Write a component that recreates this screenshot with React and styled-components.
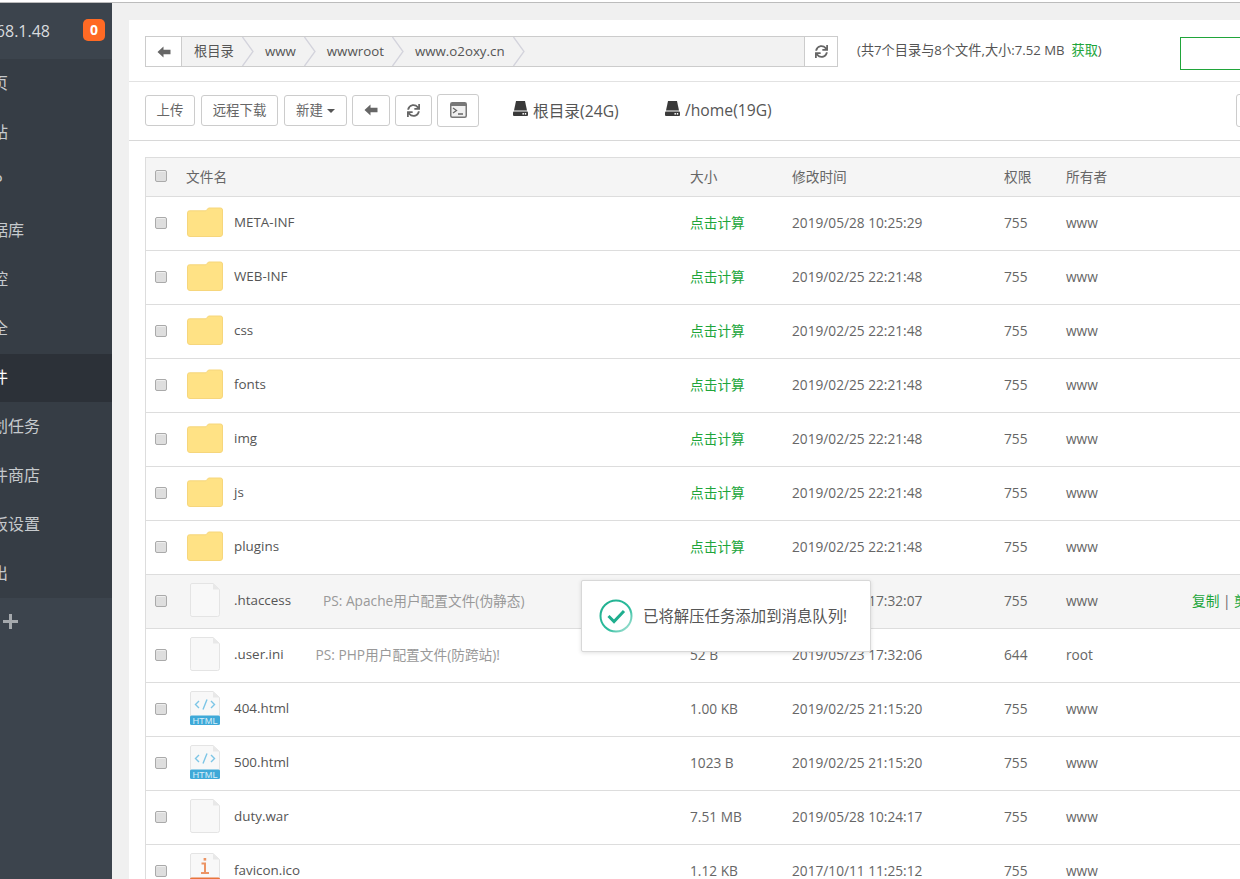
import React from 'react';
import styled, { createGlobalStyle } from 'styled-components';
import { FaSync } from 'react-icons/fa';

const FONT = '"Open Sans", "Noto Sans CJK SC", sans-serif';

const GlobalStyle = createGlobalStyle`
    html, body {
        margin: 0;
        padding: 0;
        background: #f0f0f0;
        overflow: hidden;
    }
    body {
        font-family: ${FONT};
        color: #666;
    }
`;

const Page = styled.div`
    position: relative;
    width: 1240px;
    height: 879px;
    overflow: hidden;
`;

const TopLine = styled.div`
    height: 2px;
    background: #fff;
    border-bottom: 1px solid #bcbcbc;
`;

const Shell = styled.div`
    display: flex;
    height: 876px;
`;

/* sidebar, scrolled to the left so the labels are cut off */
const Sidebar = styled.aside`
    flex: 0 0 112px;
    display: flex;
    flex-direction: column;
    background: #3c444d;
    overflow: hidden;
`;

const SideHead = styled.div`
    height: 56px;
    display: flex;
    align-items: center;
    justify-content: flex-end;
    padding-right: 7px;
`;

const HostName = styled.span`
    font-size: 16px;
    color: #d8dbde;
    margin-right: 33px;
    white-space: nowrap;
`;

const Badge = styled.span`
    flex: none;
    width: 22px;
    height: 22px;
    margin-top: -2px;
    border-radius: 5px;
    background: #ff6a24;
    color: #fff;
    font-size: 14px;
    font-weight: 700;
    text-align: center;
    line-height: 22px;
`;

const Menu = styled.nav`
    background: #363d45;
`;

const MenuItem = styled.div`
    height: 49px;
    line-height: 48px;
    text-indent: -24px;
    font-size: 16px;
    white-space: nowrap;
    color: ${p => (p.$active ? '#fff' : '#c6cacd')};
    background: ${p => (p.$active ? '#2c3138' : 'transparent')};
    box-shadow: ${p => (p.$active ? 'inset 0 1px 0 #363d45' : 'none')};
`;

const AddButton = styled.div`
    padding: 16px 0 0 3px;
    color: #a5a9ad;
    line-height: 0;
`;

const Main = styled.main`
    flex: 0 0 1400px;
    padding: 17px 0 0 17px;
`;

const Panel = styled.div`
    background: #fff;
    height: 900px;
`;

const PathBar = styled.div`
    height: 62px;
    box-sizing: border-box;
    padding: 16px 0 0 16px;
    display: flex;
    border-bottom: 1px solid #e2e2e2;
`;

const Crumbs = styled.div`
    width: 693px;
    height: 31px;
    box-sizing: border-box;
    display: flex;
    background: #f2f2f2;
    border: 1px solid #ccc;
`;

const CrumbEnd = styled.div`
    flex: 0 0 ${p => p.$w}px;
    display: flex;
    align-items: center;
    justify-content: center;
    background: #fff;
    color: #666;
    border-${p => p.$side}: 1px solid #ccc;
    box-sizing: border-box;
`;

const CrumbList = styled.div`
    flex: 1;
    display: flex;
    align-items: center;
    padding-left: 12px;
`;

const Crumb = styled.span`
    font-size: 13.3px;
    color: #555;
    margin: -2px 8px 0 0;
    white-space: nowrap;
`;

const CrumbArrow = styled.svg`
    flex: none;
    width: 12px;
    height: 29px;
    margin-right: 11px;
`;

const PathInfo = styled.div`
    margin-left: 19px;
    font-size: 13.2px;
    line-height: 29px;
    color: #555;
    white-space: nowrap;
    width: 323px;
`;

const GreenLink = styled.span`
    color: #20a53a;
`;

const SearchBox = styled.div`
    width: 200px;
    height: 33px;
    margin-top: 1px;
    box-sizing: border-box;
    border: 1px solid #20a53a;
`;

const ToolBar = styled.div`
    height: 59px;
    box-sizing: border-box;
    padding: 0 0 2px 16px;
    display: flex;
    align-items: center;
    border-bottom: 1px solid #d8d8d8;
`;

const ToolButton = styled.div`
    flex: none;
    box-sizing: border-box;
    width: ${p => p.$w}px;
    height: ${p => p.$h || 31}px;
    margin-right: ${p => p.$mr || 5}px;
    display: flex;
    align-items: center;
    justify-content: center;
    gap: 4px;
    border: 1px solid #ccc;
    border-radius: 3px;
    font-size: 13.4px;
    color: #666;
    background: #fff;
`;

const ToolLabel = styled.span`
    margin-top: -2px;
`;

const Caret = styled.i`
    border-top: 4px solid #555;
    border-left: 4px solid transparent;
    border-right: 4px solid transparent;
    margin-top: 2px;
`;

const Disk = styled.div`
    flex: none;
    display: flex;
    align-items: center;
    gap: 5px;
    font-size: 15.7px;
    color: #555;
    margin-left: ${p => p.$ml}px;
    width: ${p => p.$w}px;
    white-space: nowrap;
`;

const DiskSlot = styled.span`
    display: flex;
    margin-top: -3px;
`;

const TableWrap = styled.div`
    padding: 16px 0 0 16px;
`;

const Table = styled.div`
    border-left: 1px solid #ddd;
    border-top: 1px solid #ddd;
`;

const Row = styled.div`
    display: grid;
    grid-template-columns: 41px 503px 102px 212px 62px 126px 1fr;
    align-items: center;
    box-sizing: border-box;
    height: ${p => (p.$head ? 39 : 54)}px;
    padding-bottom: 2px;
    border-bottom: 1px solid #ddd;
    background: ${p => (p.$shaded ? '#f5f5f5' : '#fff')};
    font-size: 13.7px;
    color: #666;
    white-space: nowrap;
`;

const CheckCell = styled.div`
    display: flex;
    padding-left: 9px;
`;

const CheckBox = styled.span`
    width: 12px;
    height: 12px;
    box-sizing: border-box;
    border: 1px solid #aaa;
    border-radius: 2px;
    background: #dedede;
    box-shadow: inset 0 1px 0 #eee;
`;

const HeadName = styled.span`
    margin-left: -1px;
`;

const NameCell = styled.div`
    display: flex;
    align-items: center;
`;

const IconSlot = styled.div`
    flex: 0 0 47px;
    display: flex;
    padding-left: ${p => (p.$folder ? 0 : 3)}px;
    box-sizing: border-box;
    margin-top: -2px;
`;

const FileName = styled.span`
    color: #555;
    font-size: 13.4px;
    margin-top: -2px;
`;

const Remark = styled.span`
    color: #999;
    margin-left: 32px;
    margin-top: -2px;
`;

const Calc = styled.span`
    color: #20a53a;
`;

const SizeCalc = styled(Calc)`
    margin-top: -2px;
`;

const OpsCell = styled.div`
    margin-top: -2px;
`;

const Sep = styled.span`
    color: #666;
`;

const Toast = styled.div`
    position: absolute;
    left: 581px;
    top: 580px;
    width: 290px;
    height: 72px;
    box-sizing: border-box;
    padding-left: 17px;
    display: flex;
    align-items: center;
    gap: 10px;
    background: #fff;
    border: 1px solid #d8d8d8;
    border-radius: 2px;
    box-shadow: 0 1px 4px rgba(0, 0, 0, 0.12);
    font-size: 15.4px;
    color: #555;
`;

const ToastText = styled.span`
    margin-top: -2px;
`;

function BackIcon() {
    return (
        <svg width="14" height="12" viewBox="0 0 14 12">
            <path d="M6.5 0.5 L0.5 6 L6.5 11.5 L6.5 8.2 L13.5 8.2 L13.5 3.8 L6.5 3.8 Z" fill="#666" />
        </svg>
    );
}

function TerminalIcon() {
    return (
        <svg width="17" height="16" viewBox="0 0 17 16">
            <rect x="0.75" y="0.75" width="15.5" height="14.5" rx="1.5" fill="#f0f0f0" stroke="#777" strokeWidth="1.5" />
            <rect x="1" y="1" width="15" height="3" fill="#777" />
            <path d="M3 6 L6.5 8.5 L3 11 M8 12 L13 12" fill="none" stroke="#666" strokeWidth="1.3" />
        </svg>
    );
}

function DiskIcon() {
    return (
        <svg width="15" height="15" viewBox="0 0 15 15">
            <path d="M3 0 L12 0 L14 9.5 L1 9.5 Z" fill="#3a3a3a" />
            <rect x="0" y="10.5" width="15" height="4.5" rx="1" fill="#3a3a3a" />
            <rect x="9.5" y="12" width="1.4" height="1.6" fill="#fff" />
            <rect x="11.8" y="12" width="1.4" height="1.6" fill="#fff" />
        </svg>
    );
}

function FolderIcon() {
    return (
        <svg width="36" height="30" viewBox="0 0 36 30">
            <path d="M2.5 3.8 L19 3.8 L21.5 1 L33.5 1 Q35.5 1 35.5 3 L35.5 27 Q35.5 29.5 33 29.5 L3 29.5 Q0.5 29.5 0.5 27 L0.5 5.8 Q0.5 3.8 2.5 3.8 Z" fill="#ffe285" stroke="#f6d67c" />
        </svg>
    );
}

function FileIcon({ band, label, children }) {
    return (
        <svg width="30" height="34" viewBox="0 0 30 34">
            <path d="M2 0.5 L23 0.5 L29.5 6.5 L29.5 31.5 Q29.5 33.5 27.5 33.5 L2 33.5 Q0.5 33.5 0.5 31.5 L0.5 2 Q0.5 0.5 2 0.5 Z" fill="#f8f8f8" stroke="#e4e4e4" />
            <path d="M23 0.5 L23 6.5 L29.5 6.5 Z" fill="#e8e8e8" />
            {children}
            {band && <rect x="0" y="24.5" width="30" height="9.5" rx="1.5" fill={band} />}
            {label && <text x="15" y="32.6" textAnchor="middle" fontSize="9.2" fill="#d8eef8" fontFamily="Liberation Sans, sans-serif">{label}</text>}
        </svg>
    );
}

function HtmlIcon() {
    return (
        <FileIcon band="#3fa9d8" label="HTML">
            <path d="M9 10 L5.5 13.5 L9 17 M21 10 L24.5 13.5 L21 17 M17 8.5 L13 18.5" fill="none" stroke="#7cc5e6" strokeWidth="1.4" />
        </FileIcon>
    );
}

function IcoIcon() {
    return (
        <FileIcon band="#e8743b">
            <path d="M11.5 10.5 L15 10.5 L15 20 M11 20 L19 20" fill="none" stroke="#ec9464" strokeWidth="2" />
            <rect x="13.6" y="5" width="2.6" height="2.6" fill="#ec9464" />
        </FileIcon>
    );
}

function ToastIcon() {
    return (
        <svg width="34" height="34" viewBox="0 0 34 34">
            <defs>
                <linearGradient id="toastRing" x1="0" y1="0" x2="1" y2="1">
                    <stop offset="0" stopColor="#1fae8e" />
                    <stop offset="0.6" stopColor="#2dbd9e" />
                    <stop offset="1" stopColor="#bde8de" />
                </linearGradient>
            </defs>
            <circle cx="17" cy="17" r="15.5" fill="none" stroke="url(#toastRing)" strokeWidth="2" />
            <path d="M9.5 17 L15 22.5 L25 12" fill="none" stroke="#1fae8e" strokeWidth="3" />
        </svg>
    );
}

const MENU = ['首页', '网站', 'FTP', '数据库', '监控', '安全', '文件', '计划任务', '软件商店', '面板设置', '退出'];

const FILES = [
    { name: 'META-INF', folder: true, date: '2019/05/28 10:25:29', perm: '755', owner: 'www' },
    { name: 'WEB-INF', folder: true, date: '2019/02/25 22:21:48', perm: '755', owner: 'www' },
    { name: 'css', folder: true, date: '2019/02/25 22:21:48', perm: '755', owner: 'www' },
    { name: 'fonts', folder: true, date: '2019/02/25 22:21:48', perm: '755', owner: 'www' },
    { name: 'img', folder: true, date: '2019/02/25 22:21:48', perm: '755', owner: 'www' },
    { name: 'js', folder: true, date: '2019/02/25 22:21:48', perm: '755', owner: 'www' },
    { name: 'plugins', folder: true, date: '2019/02/25 22:21:48', perm: '755', owner: 'www' },
    { name: '.htaccess', icon: 'file', remark: 'PS: Apache用户配置文件(伪静态)', size: '47 B', date: '2019/05/23 17:32:07', perm: '755', owner: 'www', shaded: true, ops: true },
    { name: '.user.ini', icon: 'file', remark: 'PS: PHP用户配置文件(防跨站)!', size: '52 B', date: '2019/05/23 17:32:06', perm: '644', owner: 'root' },
    { name: '404.html', icon: 'html', size: '1.00 KB', date: '2019/02/25 21:15:20', perm: '755', owner: 'www' },
    { name: '500.html', icon: 'html', size: '1023 B', date: '2019/02/25 21:15:20', perm: '755', owner: 'www' },
    { name: 'duty.war', icon: 'file', size: '7.51 MB', date: '2019/05/28 10:24:17', perm: '755', owner: 'www' },
    { name: 'favicon.ico', icon: 'ico', size: '1.12 KB', date: '2017/10/11 11:25:12', perm: '755', owner: 'www' },
];

function renderFileIcon(file) {
    if (file.folder) return <FolderIcon />;
    if (file.icon === 'html') return <HtmlIcon />;
    if (file.icon === 'ico') return <IcoIcon />;
    return <FileIcon />;
}

export default function App() {
    return (
        <Page>
            <GlobalStyle />
            <TopLine />
            <Shell>
                <Sidebar>
                    <SideHead>
                        <HostName>192.168.1.48</HostName>
                        <Badge>0</Badge>
                    </SideHead>
                    <Menu>
                        {MENU.map((label, i) => (
                            <MenuItem key={label} $active={i === 6}>{label}</MenuItem>
                        ))}
                    </Menu>
                    <AddButton>
                        <svg width="15" height="15" viewBox="0 0 15 15">
                            <path d="M6 0 H9 V6 H15 V9 H9 V15 H6 V9 H0 V6 H6 Z" fill="currentColor" />
                        </svg>
                    </AddButton>
                </Sidebar>
                <Main>
                    <Panel>
                        <PathBar>
                            <Crumbs>
                                <CrumbEnd $w={36} $side="right"><BackIcon /></CrumbEnd>
                                <CrumbList>
                                    {['根目录', 'www', 'wwwroot', 'www.o2oxy.cn'].map(c => (
                                        <React.Fragment key={c}>
                                            <Crumb>{c}</Crumb>
                                            <CrumbArrow viewBox="0 0 12 29">
                                                <path d="M0.5 0 L11 14.5 L0.5 29" fill="none" stroke="#d3d3dc" strokeWidth="1.3" />
                                            </CrumbArrow>
                                        </React.Fragment>
                                    ))}
                                </CrumbList>
                                <CrumbEnd $w={33} $side="left"><FaSync size={13} /></CrumbEnd>
                            </Crumbs>
                            <PathInfo>(共7个目录与8个文件,大小:7.52 MB&nbsp; <GreenLink>获取</GreenLink>)</PathInfo>
                            <SearchBox />
                        </PathBar>
                        <ToolBar>
                            <ToolButton $w={50} $mr={6}><ToolLabel>上传</ToolLabel></ToolButton>
                            <ToolButton $w={77} $mr={6}><ToolLabel>远程下载</ToolLabel></ToolButton>
                            <ToolButton $w={63}><ToolLabel>新建</ToolLabel><Caret /></ToolButton>
                            <ToolButton $w={38}><BackIcon /></ToolButton>
                            <ToolButton $w={37}><FaSync size={13} color="#666" /></ToolButton>
                            <ToolButton $w={42} $h={33}><TerminalIcon /></ToolButton>
                            <Disk $ml={29} $w={152}><DiskSlot><DiskIcon /></DiskSlot>根目录(24G)</Disk>
                            <Disk $ml={0} $w={571}><DiskSlot><DiskIcon /></DiskSlot>/home(19G)</Disk>
                            <ToolButton $w={60} $h={33} />
                        </ToolBar>
                        <TableWrap>
                            <Table>
                                <Row $head $shaded>
                                    <CheckCell><CheckBox /></CheckCell>
                                    <HeadName>文件名</HeadName>
                                    <span>大小</span>
                                    <span>修改时间</span>
                                    <span>权限</span>
                                    <span>所有者</span>
                                    <span />
                                </Row>
                                {FILES.map(file => (
                                    <Row key={file.name} $shaded={file.shaded}>
                                        <CheckCell><CheckBox /></CheckCell>
                                        <NameCell>
                                            <IconSlot $folder={file.folder}>{renderFileIcon(file)}</IconSlot>
                                            <FileName>{file.name}</FileName>
                                            {file.remark && <Remark>{file.remark}</Remark>}
                                        </NameCell>
                                        {file.folder ? <SizeCalc>点击计算</SizeCalc> : <span>{file.size}</span>}
                                        <span>{file.date}</span>
                                        <span>{file.perm}</span>
                                        <span>{file.owner}</span>
                                        <OpsCell>
                                            {file.ops && (
                                                <>
                                                    <Calc>复制</Calc> <Sep>|</Sep> <Calc>剪切</Calc>
                                                </>
                                            )}
                                        </OpsCell>
                                    </Row>
                                ))}
                            </Table>
                        </TableWrap>
                    </Panel>
                </Main>
            </Shell>
            <Toast>
                <ToastIcon />
                <ToastText>已将解压任务添加到消息队列!</ToastText>
            </Toast>
        </Page>
    );
}
